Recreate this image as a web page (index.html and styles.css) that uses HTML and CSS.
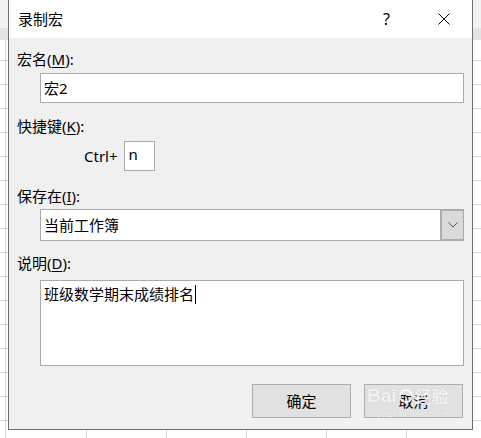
FILE: index.html
```html
<!DOCTYPE html>
<html>
    <head>
        <title>录制宏</title>
        <link rel="stylesheet" href="styles.css">
    </head>
    <body>
        <div class="dialog">
            <div class="titlebar">
                <span class="title">录制宏</span>
                <div class="caption">
                    <span class="cap-btn">?</span>
                    <span class="cap-btn">
                        <svg width="12" height="12" viewBox="0 0 12 12"><path d="M0.5 0.5L11.5 11.5M11.5 0.5L0.5 11.5" stroke="#000" stroke-width="1" fill="none"/></svg>
                    </span>
                </div>
            </div>

            <div class="content">
                <div class="label lbl-name">宏名(<u>M</u>):</div>
                <div class="field name-box">宏2</div>

                <div class="label lbl-key">快捷键(<u>K</u>):</div>
                <div class="key-row">
                    <span class="ctrl">Ctrl+</span>
                    <div class="keybox">n</div>
                </div>

                <div class="label lbl-store">保存在(<u>I</u>):</div>
                <div class="combo">
                    <div class="combo-text">当前工作簿</div>
                    <div class="combo-btn">
                        <svg width="10" height="6" viewBox="0 0 10 6"><path d="M0.5 0.5L5 5L9.5 0.5" stroke="#555" stroke-width="1" fill="none"/></svg>
                    </div>
                </div>

                <div class="label lbl-desc">说明(<u>D</u>):</div>
                <div class="field desc-box">班级数学期末成绩排名<span class="caret"></span></div>

                <div class="buttons">
                    <div class="btn">确定</div>
                    <div class="btn">取消</div>
                </div>
            </div>

            <!-- watermark over the cancel button -->
            <div class="watermark">
                <div class="wm-logo">Bai<span class="paw"></span><span class="wm-jy">经验</span></div>
                <div class="wm-url">jingyan.baidu.com</div>
            </div>
        </div>
    </body>
</html>
```

FILE: styles.css
```css
html, body {
    margin: 0;
    height: 100%;
}

body {
    font-family: "Noto Sans", "Noto Sans CJK SC", sans-serif;
    font-size: 15px;
    color: #000;
    overflow: hidden;
    background:
        linear-gradient(to bottom, #f3f3f3 0 28px, #e4e4e4 28px 40px, transparent 40px) no-repeat,
        repeating-linear-gradient(to bottom, transparent 0 23px, #d6d6d6 23px 24px) 0 13px,
        repeating-linear-gradient(to right, transparent 0 79px, #d6d6d6 79px 80px) 7px 0,
        #fff;
}

.dialog {
    position: relative;
    margin-left: 8px;
    width: 465px;
    box-sizing: border-box;
    border: 1px solid #6e6e6e;
    border-top: none;
    background: #f0f0f0;
}

.titlebar {
    height: 38px;
    background: #fff;
    display: flex;
    align-items: center;
    justify-content: space-between;
}

.title {
    padding-left: 9px;
    line-height: 20px;
}

.caption {
    display: flex;
    align-self: stretch;
}

.cap-btn {
    width: 57px;
    display: flex;
    align-items: center;
    justify-content: center;
    font-size: 16px;
}

.content {
    padding: 11px 8px 11px 8px;
    display: flex;
    flex-direction: column;
}

.label {
    height: 20px;
    line-height: 20px;
}

.label u {
    text-underline-offset: 2px;
}

.field {
    margin-left: 23px;
    box-sizing: border-box;
    border: 1px solid #a9a9a9;
    background: #fff;
    padding-left: 3px;
}

.name-box {
    margin-top: 4px;
    height: 30px;
    line-height: 28px;
}

.lbl-key {
    margin-top: 13px;
}

.key-row {
    margin-top: 5px;
    display: flex;
    align-items: center;
    padding-left: 67px;
}

.ctrl {
    margin-right: 6px;
}

.keybox {
    width: 31px;
    height: 30px;
    box-sizing: border-box;
    border: 1px solid #a9a9a9;
    background: #fff;
    padding-left: 4px;
    line-height: 24px;
}

.lbl-store {
    margin-top: 15px;
}

.combo {
    margin-top: 3px;
    margin-left: 23px;
    height: 32px;
    box-sizing: border-box;
    border: 1px solid #a9a9a9;
    background: #fff;
    display: flex;
}

.combo-text {
    flex: 1;
    padding-left: 3px;
    line-height: 30px;
}

.combo-btn {
    width: 21px;
    background: #dadada;
    border: 2px solid #adadad;
    border-top-width: 1px;
    border-bottom-width: 1px;
    border-right: none;
    display: flex;
    align-items: center;
    justify-content: center;
}

.lbl-desc {
    margin-top: 12px;
}

.desc-box {
    margin-top: 7px;
    height: 86px;
    line-height: 24px;
    padding-top: 1px;
}

.caret {
    display: inline-block;
    width: 1px;
    height: 19px;
    background: #000;
    vertical-align: -4px;
    margin-left: 1px;
}

.buttons {
    margin-top: 18px;
    display: flex;
    justify-content: flex-end;
    gap: 13px;
    padding-right: 1px;
}

.btn {
    width: 99px;
    height: 34px;
    box-sizing: border-box;
    border: 1px solid #adadad;
    background: #e1e1e1;
    text-align: center;
    line-height: 32px;
}

.watermark {
    position: absolute;
    left: 358px;
    top: 384px;
    width: 100px;
    color: rgba(255, 255, 255, 0.8);
    text-shadow: 0 0 1px rgba(160, 160, 160, 0.5);
    pointer-events: none;
}

.wm-logo {
    font-family: "Liberation Sans", sans-serif;
    font-weight: bold;
    font-size: 19px;
    line-height: 24px;
    display: flex;
    align-items: center;
}

.paw {
    display: inline-block;
    width: 14px;
    height: 14px;
    border-radius: 50%;
    border: 2px solid rgba(255, 255, 255, 0.8);
    box-sizing: border-box;
    margin: 0 2px;
}

.wm-jy {
    font-family: "Noto Sans CJK SC", sans-serif;
    font-size: 17px;
}

.wm-url {
    font-family: "Liberation Serif", serif;
    font-size: 10px;
    line-height: 12px;
    padding-left: 10px;
}
```
